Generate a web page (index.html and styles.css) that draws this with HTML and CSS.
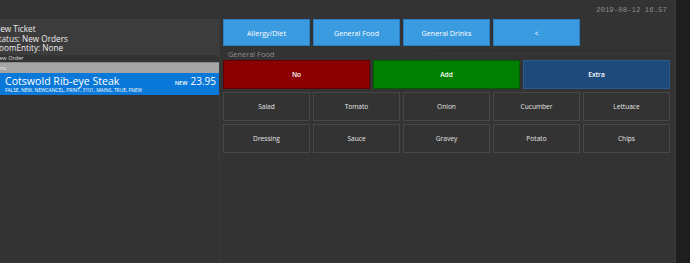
FILE: index.html
```html
<!DOCTYPE html>
<html lang="en">
<head>
  <meta charset="UTF-8">
  <meta name="viewport" content="width=device-width, initial-scale=1.0">
  <title>POS - Ticket</title>
  <link rel="stylesheet" href="styles.css">
</head>
<body>
  <div class="screen">
    <div class="workspace">
      <header class="topbar">
        <span class="clock">2019-08-12 16.57</span>
      </header>

      <main class="content">
        <!-- Ticket side -->
        <section class="ticket">
          <div class="ticket-info">
            <p>New Ticket</p>
            <p>Status: New Orders</p>
            <p>RoomEntity: None</p>
          </div>
          <div class="order-caption">New Order</div>
          <div class="group-bar">Mains</div>
          <div class="order-line">
            <div class="order-main">
              <span class="order-name">Cotswold Rib-eye Steak</span>
              <span class="order-tags">FALSE, NEW, NEWCANCEL, PRINT, 3101, MAINS, TRUE, FNEW</span>
            </div>
            <div class="order-price">
              <span class="order-state">NEW</span>
              <span class="order-amount">23.95</span>
            </div>
          </div>
        </section>

        <!-- Tag editor side -->
        <section class="editor">
          <div class="category-row">
            <button class="cat-btn">Allergy/Diet</button>
            <button class="cat-btn">General Food</button>
            <button class="cat-btn">General Drinks</button>
            <button class="cat-btn">&lt;</button>
          </div>

          <div class="group-label"><span>General Food</span></div>

          <div class="action-row">
            <button class="act-btn act-no">No</button>
            <button class="act-btn act-add">Add</button>
            <button class="act-btn act-extra">Extra</button>
          </div>

          <div class="tag-grid" id="tagGrid">
            <!-- tag buttons injected here -->
          </div>
        </section>
      </main>
    </div>
    <div class="side-strip"></div>
  </div>

  <script>
    const tags = ['Salad', 'Tomato', 'Onion', 'Cucumber', 'Lettuace',
                  'Dressing', 'Sauce', 'Gravey', 'Potato', 'Chips'];

    const grid = document.getElementById('tagGrid');
    tags.forEach(tag => {
      const btn = document.createElement('button');
      btn.className = 'tag-btn';
      btn.textContent = tag;
      grid.appendChild(btn);
    });
  </script>
</body>
</html>
```

FILE: styles.css
```css
/* General Styles */
body {
  margin: 0;
  padding: 0;
  background-color: #333333;
  color: #e6e6e6;
  font-family: "Open Sans", "Noto Sans", sans-serif;
}

p {
  margin: 0;
}

button {
  font-family: inherit;
  cursor: pointer;
}

.screen {
  display: flex;
  height: 263px;
  overflow: hidden;
}

.workspace {
  width: 675px;
  border-right: 1px solid #3c3c3c;
  display: flex;
  flex-direction: column;
}

.side-strip {
  flex: 1;
  background-color: #1e1e1e;
}

/* Top bar */
.topbar {
  height: 19px;
  display: flex;
  justify-content: flex-end;
  align-items: center;
  padding-right: 8px;
}

.clock {
  font-family: "Liberation Mono", "DejaVu Sans Mono", monospace;
  font-size: 7.4px;
  color: #8c8c8c;
  margin-top: 1px;
}

.content {
  display: flex;
  flex: 1;
}

/* Ticket */
.ticket {
  width: 219px;
  border-right: 1px solid #3a3a3a;
  overflow: hidden;
}

.ticket-info {
  height: 36px;
  background-color: #3c3c3c;
  padding-top: 5px;
  box-sizing: border-box;
  margin-left: -6px;
  font-size: 8.2px;
  line-height: 9.6px;
  color: #ececec;
}

.order-caption {
  margin-left: -5px;
  height: 7px;
  font-size: 5.6px;
  line-height: 7px;
  color: #dddddd;
}

.group-bar {
  height: 11px;
  background-color: #a5a5a5;
  border-top: 1px solid #8a8a8a;
  box-sizing: border-box;
  margin-left: -9px;
  font-size: 5.4px;
  line-height: 10px;
  color: #f2f2f2;
}

.order-line {
  height: 22px;
  background-color: #0a78d8;
  display: flex;
  justify-content: space-between;
  align-items: flex-start;
  padding: 2px 3px 0 5px;
  box-sizing: border-box;
  color: #ffffff;
}

.order-main {
  display: flex;
  flex-direction: column;
}

.order-name {
  font-size: 10.6px;
  line-height: 13px;
}

.order-tags {
  font-size: 4.9px;
  line-height: 5px;
}

.order-price {
  display: flex;
  align-items: baseline;
  gap: 3px;
}

.order-state {
  font-size: 5.6px;
  font-weight: 600;
}

.order-amount {
  font-size: 10px;
  line-height: 13px;
}

/* Editor */
.editor {
  flex: 1;
  padding-left: 3px;
}

.category-row {
  display: flex;
  gap: 3px;
}

.cat-btn {
  width: 87px;
  height: 27px;
  background-color: #3a9be0;
  border: 1px solid #2b7fc0;
  color: #ffffff;
  font-size: 7.2px;
  padding: 0;
}

.group-label {
  height: 14px;
  display: flex;
  align-items: center;
  font-size: 7.4px;
  color: #8f8f8f;
  padding-left: 5px;
  padding-top: 1px;
  box-sizing: border-box;
}

.group-label::after {
  content: "";
  flex: 1;
  margin-left: 160px;
  border-top: 1px solid #3a3a3a;
}

.action-row {
  display: flex;
  gap: 3px;
}

.act-btn {
  width: 147px;
  height: 29px;
  color: #ffffff;
  font-size: 6.6px;
  font-weight: 600;
  padding: 0;
}

.act-no {
  background-color: #8b0000;
  border: 1px solid #5e0000;
}

.act-add {
  background-color: #008000;
  border: 1px solid #005c00;
}

.act-extra {
  background-color: #1e4a7c;
  border: 1px solid #2a5a90;
}

.tag-grid {
  display: grid;
  grid-template-columns: repeat(5, 87px);
  grid-auto-rows: 29px;
  gap: 3px;
  margin-top: 3px;
}

.tag-btn {
  background-color: #333333;
  border: 1px solid #474747;
  color: #e6e6e6;
  font-size: 6.6px;
  padding: 0;
}

.tag-btn:hover {
  background-color: #3c3c3c;
}
```
